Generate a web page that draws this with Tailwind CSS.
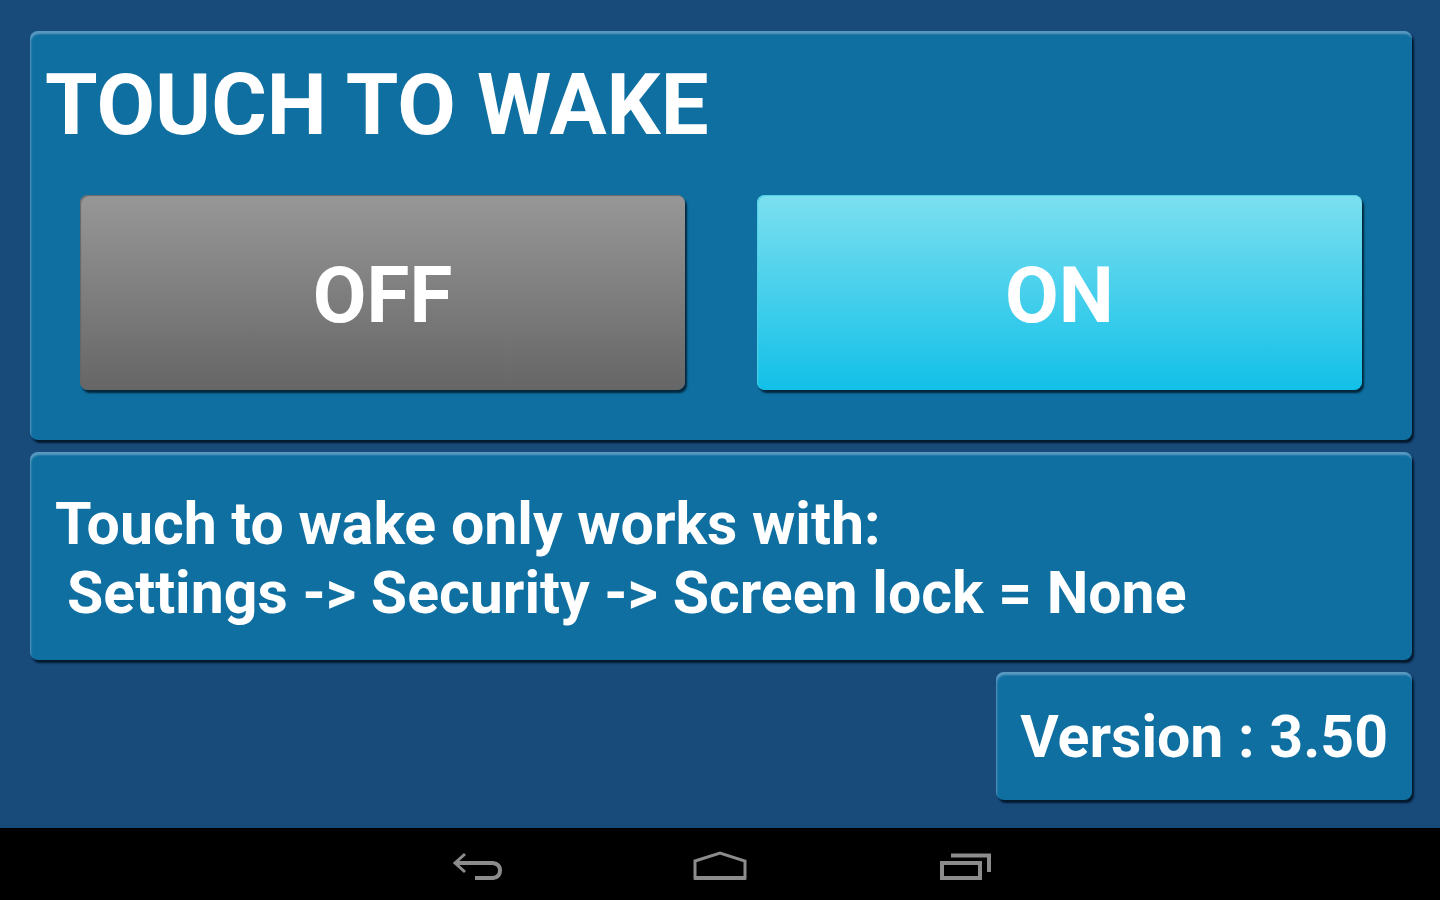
<!DOCTYPE html>
<html lang="en">
<head>
<meta charset="utf-8">
<title>Touch to Wake</title>
<script src="https://cdn.jsdelivr.net/npm/@tailwindcss/browser@4"></script>
</head>
<body class="min-h-screen flex flex-col bg-[#184a7a] text-white font-bold font-['Roboto',sans-serif]">
<main class="flex-1 flex flex-col gap-3 pl-[30px] pr-7 pt-[31px]">
  <section class="rounded-lg bg-[#0e6fa0] shadow-[inset_1px_3px_2px_#5c99c0,2px_3px_2px_#03192e] pt-[26px] pb-[50px]">
    <h1 class="pl-[15px] text-[85px] leading-[96px]">TOUCH TO WAKE</h1>
    <div class="grid grid-cols-2 gap-[72px] px-[50px] mt-[42px] text-[78px]">
      <button type="button" class="h-[195px] pt-[6px] rounded-lg bg-linear-to-b/srgb from-[#979797] to-[#666666] shadow-[inset_1px_1px_1px_#666666,2px_3px_2px_#03263c]">OFF</button>
      <button type="button" class="h-[195px] pt-[6px] rounded-lg bg-linear-to-b/srgb from-[#7cdff0] to-[#12c0e8] shadow-[inset_1px_1px_1px_#4fd0e6,2px_3px_2px_#03263c]">ON</button>
    </div>
  </section>
  <section class="rounded-lg bg-[#0e6fa0] shadow-[inset_1px_3px_2px_#5c99c0,2px_3px_2px_#03192e] pt-[37px] pb-[33px] pl-[25px] text-[59px] leading-[69px]">
    <p>Touch to wake only works with:</p>
    <p class="pl-3">Settings -&gt; Security -&gt; Screen lock = None</p>
  </section>
  <p class="self-end rounded-lg bg-[#0e6fa0] shadow-[inset_1px_3px_2px_#5c99c0,2px_3px_2px_#03192e] pt-[30px] pb-7 px-6 text-[59px] leading-[70px]">Version : 3.50</p>
</main>
<nav class="h-[72px] shrink-0 bg-black flex justify-center text-[#8c8c8c]" aria-label="System">
  <button type="button" aria-label="Back" class="w-[244px] flex items-center justify-center pt-1">
    <svg class="w-14 h-8" viewBox="0 0 56 32" fill="none" stroke="currentColor" stroke-width="3"><path d="M17 4 7 13l10 9"/><path stroke-width="4" d="M7 13h38q7 1 7 7.500t-7 7.500H27"/></svg>
  </button>
  <button type="button" aria-label="Home" class="w-[244px] flex items-center justify-center pt-1">
    <svg class="w-14 h-8" viewBox="0 0 56 32" fill="none" stroke="currentColor" stroke-width="3"><path d="M3 11 28 3l25 8v17H3z"/><path stroke-width="4" d="M2 28h52"/></svg>
  </button>
  <button type="button" aria-label="Recent apps" class="w-[244px] flex items-center justify-center pt-1">
    <svg class="w-14 h-8" viewBox="0 0 56 32" fill="none" stroke="currentColor" stroke-width="4"><path d="M6 13h38v15H6zM15 5.500h38V22"/></svg>
  </button>
</nav>
</body>
</html>
